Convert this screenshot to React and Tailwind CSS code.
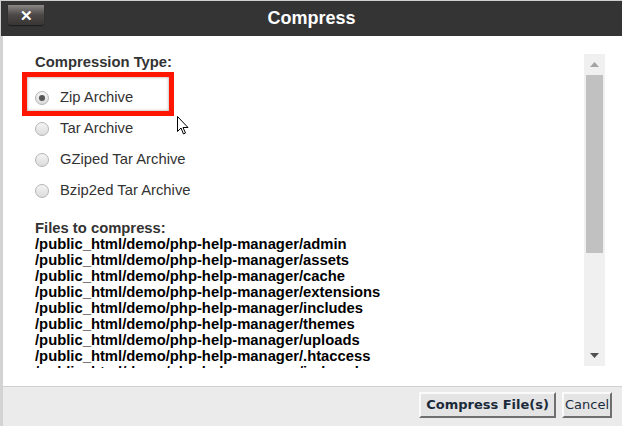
import React from 'react';

const FILES = [
  'admin',
  'assets',
  'cache',
  'extensions',
  'includes',
  'themes',
  'uploads',
  '.htaccess',
  'index.php',
];

const TYPES = ['Zip Archive', 'Tar Archive', 'GZiped Tar Archive', 'Bzip2ed Tar Archive'];

function Radio({ checked }) {
  return (
    <span className="flex h-[14px] w-[14px] items-center justify-center rounded-full border border-[#b5b5b5] bg-gradient-to-b from-[#f4f4f4] to-[#dcdcdc]">
      {checked && <span className="h-[6px] w-[6px] rounded-full bg-[#555]" />}
    </span>
  );
}

function Scrollbar() {
  return (
    <div className="flex h-[312px] w-[21px] flex-col bg-[#f0f0f0]">
      <div className="flex h-[21px] items-center justify-center">
        <svg width="9" height="5" viewBox="0 0 9 5"><path d="M4.5 0 9 5H0z" fill="#a3a3a3" /></svg>
      </div>
      <div className="mx-[2px] h-[178px] bg-[#c1c1c1]" />
      <div className="flex-1" />
      <div className="flex h-[21px] items-center justify-center">
        <svg width="9" height="5" viewBox="0 0 9 5"><path d="M0 0h9L4.5 5z" fill="#505050" /></svg>
      </div>
    </div>
  );
}

export default function App() {
  return (
    <div className="relative flex h-[426px] w-[622px] flex-col overflow-hidden bg-white font-['Liberation_Sans',Arial,sans-serif]">
      <div className="relative flex h-[36px] items-center justify-center border-l border-t border-[#cfcfcf] bg-[#343434]">
        <button
          type="button"
          className="absolute left-[7px] top-[4px] flex h-[20px] w-[36px] items-center justify-center rounded-b-[3px] bg-gradient-to-b from-[#8c8888] via-[#4d4848] to-[#3a3535] shadow-[0_1px_1px_#1c1c1c] text-[15px] font-bold leading-none text-white"
        >
          ✕
        </button>
        <span className="text-[18px] font-bold text-white">Compress</span>
      </div>

      <div className="flex flex-1 border-l-[3px] border-[#d3d3d3] pt-[16px]">
        <div className="h-[316px] flex-1 overflow-hidden pl-[32px] pt-[2px]">
          <div className="text-[14.8px] font-bold leading-[16px] text-[#333]">Compression Type:</div>
          <div className="mt-[12px] flex flex-col">
            {TYPES.map((t, i) => (
              <div key={t} className="relative flex h-[31px] items-center gap-[11px] text-[14.8px] text-[#333]">
                {i === 0 && (
                  <span className="absolute left-[-13px] top-[-10px] h-[44px] w-[152px] border-[5px] border-[#ff1500] shadow-[inset_0_0_3px_#999]" />
                )}
                <Radio checked={i === 0} />
                <span>{t}</span>
              </div>
            ))}
          </div>
          <div className="mt-[14px] text-[14.8px] font-bold leading-[16px] text-[#333]">Files to compress:</div>
          <div className="text-[14.8px] font-bold leading-[16px] text-black">
            {FILES.map((f) => (
              <div key={f}>/public_html/demo/php-help-manager/{f}</div>
            ))}
          </div>
        </div>
        <div className="mr-[17px] pt-[2px]">
          <Scrollbar />
        </div>
      </div>

      <div className="flex h-[40px] items-start justify-end gap-[6px] border-t border-l-[3px] border-t-[#d0d0d0] border-l-[#d3d3d3] bg-[#ebebeb] pr-[10px] pt-[5px] font-['DejaVu_Sans',Verdana,sans-serif] text-[13px] text-[#1a2a3a]">
        <button
          type="button"
          className="h-[26px] border-2 border-b-[#6f6f6f] border-l-[#fafafa] border-r-[#6f6f6f] border-t-[#fafafa] bg-[#e4e4e4] px-[5px] font-bold"
        >
          Compress File(s)
        </button>
        <button
          type="button"
          className="h-[26px] border-2 border-b-[#6f6f6f] border-l-[#fafafa] border-r-[#6f6f6f] border-t-[#fafafa] bg-[#e4e4e4] px-[1px]"
        >
          Cancel
        </button>
      </div>

      <svg className="absolute left-[177px] top-[116px]" width="12" height="19" viewBox="0 0 12 19">
        <path d="M0.5 0.5v15l3.5-3.5 2.5 6 2-1-2.5-5.5h5z" fill="white" stroke="black" strokeWidth="1" />
      </svg>
    </div>
  );
}
